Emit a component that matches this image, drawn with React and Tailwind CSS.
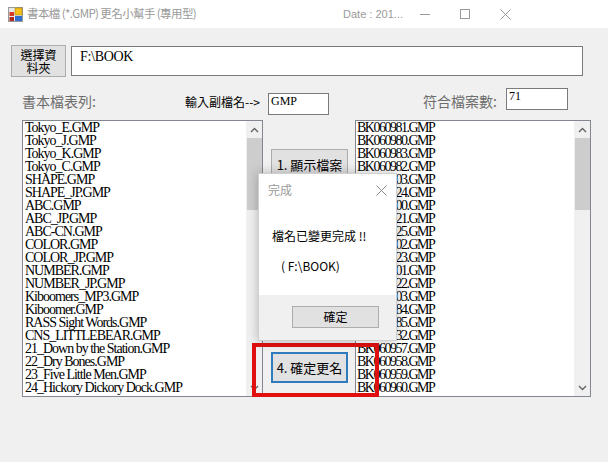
import React from "react";

const leftItems = [
  "Tokyo_E.GMP", "Tokyo_J.GMP", "Tokyo_K.GMP", "Tokyo_C.GMP", "SHAPE.GMP", "SHAPE_JP.GMP",
  "ABC.GMP", "ABC_JP.GMP", "ABC-CN.GMP", "COLOR.GMP", "COLOR_JP.GMP", "NUMBER.GMP",
  "NUMBER_JP.GMP", "Kiboomers_MP3.GMP", "Kiboomer.GMP", "RASS Sight Words.GMP",
  "CNS_LITTLEBEAR.GMP", "21_Down by the Station.GMP", "22_Dry Bones.GMP",
  "23_Five Little Men.GMP", "24_Hickory Dickory Dock.GMP",
];

const rightItems = [
  "BK060981", "BK060980", "BK060983", "BK060982", "BK060903", "BK060924", "BK060900",
  "BK060921", "BK060925", "BK060902", "BK060923", "BK060901", "BK060922", "BK060903",
  "BK060984", "BK060985", "BK060932", "BK060957", "BK060958", "BK060959", "BK060960",
].map((s) => s + ".GMP");

function ScrollBar() {
  return (
    <div className="w-[16px] h-full bg-[#f0f0f0] flex flex-col items-center">
      <div className="h-[17px] w-full flex items-center justify-center">
        <svg width="9" height="6" viewBox="0 0 9 6">
          <polyline points="1,5 4.5,1.5 8,5" fill="none" stroke="#606060" strokeWidth="1.3" />
        </svg>
      </div>
      <div className="w-[15px] h-[72px] bg-[#cdcdcd]" />
      <div className="flex-1" />
      <div className="h-[17px] w-full flex items-center justify-center">
        <svg width="9" height="6" viewBox="0 0 9 6">
          <polyline points="1,1 4.5,4.5 8,1" fill="none" stroke="#606060" strokeWidth="1.3" />
        </svg>
      </div>
    </div>
  );
}

export default function App() {
  return (
    <div className="w-[608px] h-[462px] bg-[#f0f0f0] relative overflow-hidden font-['Noto_Sans_CJK_TC',sans-serif]">
      {/* Title bar */}
      <div className="h-[28px] bg-white flex items-center">
        <svg className="ml-[8px]" width="15" height="15" viewBox="0 0 15 15">
          <rect x="0.5" y="0.5" width="14" height="14" fill="#e8e8e8" stroke="#9a9a9a" />
          <rect x="7" y="1" width="7" height="7" fill="#f6c21a" stroke="#b08000" strokeWidth="0.6" />
          <rect x="1.5" y="5" width="4.5" height="4" fill="#d33a2a" />
          <rect x="1.5" y="10" width="4.5" height="4" fill="#b02a20" />
          <rect x="7" y="9" width="7" height="5" fill="#2f6fd0" />
        </svg>
        <span className="ml-[4px] text-[11.5px] tracking-[-0.6px] text-[#9a9a9a] leading-none">書本檔 (*.GMP) 更名小幫手 (專用型)</span>
        <div className="flex-1" />
        <span className="mr-[2px] text-[11px] text-[#9a9a9a] leading-none font-['Liberation_Sans',sans-serif]">Date : 201...</span>
        <div className="w-[40px] h-[28px] flex items-center justify-center">
          <div className="w-[10px] h-px bg-[#9a9a9a]" />
        </div>
        <div className="w-[40px] h-[28px] flex items-center justify-center">
          <div className="w-[10px] h-[10px] border border-[#9a9a9a]" />
        </div>
        <div className="w-[40px] h-[28px] flex items-center justify-center">
          <svg width="11" height="11" viewBox="0 0 11 11">
            <path d="M0.5 0.5 L10.5 10.5 M10.5 0.5 L0.5 10.5" stroke="#9a9a9a" strokeWidth="1" />
          </svg>
        </div>
        <div className="w-[83px]" />
      </div>

      {/* Row 1 */}
      <div className="mt-[17px] ml-[11px] flex items-center">
        <button className="w-[55px] h-[32px] border border-[#adadad] bg-[#e1e1e1] text-[12px] leading-[13px] text-black flex flex-col items-center justify-center">
          <span>選擇資</span>
          <span>料夾</span>
        </button>
        <div className="ml-[5px] w-[512px] h-[30px] bg-white border border-[#7a7a7a] pl-[8px] pt-[2px] text-[14px] leading-[16px] tracking-[-0.3px] font-['Liberation_Serif',serif] text-black">
          F:\BOOK
        </div>
      </div>

      {/* Row 2 */}
      <div className="mt-[10px] h-[28px] flex items-start">
        <span className="ml-[22px] mt-[6px] w-[163px] text-[14px] leading-[16px] text-[#6d6d6d]">書本檔表列:</span>
        <span className="mt-[8px] w-[83px] text-[12px] leading-[14px] text-black">輸入副檔名--&gt;</span>
        <div className="mt-[6px] w-[61px] h-[22px] bg-white border border-[#7a7a7a] pl-[2px] text-[12px] leading-[15px] font-['Liberation_Serif',serif]">GMP</div>
        <span className="ml-[94px] mt-[6px] w-[83px] text-[14px] leading-[16px] text-[#6d6d6d]">符合檔案數:</span>
        <div className="mt-[1px] w-[62px] h-[22px] bg-white border border-[#7a7a7a] pl-[2px] text-[12px] leading-[15px] font-['Liberation_Serif',serif]">71</div>
      </div>

      {/* Row 3 */}
      <div className="mt-[5px] flex items-start">
        <div className="ml-[22px] w-[241px] h-[277px] bg-white border border-[#828790] flex">
          <div className="flex-1 pl-[2px] font-['Liberation_Serif',serif] text-[14px] tracking-[-1px] text-black overflow-hidden">
            {leftItems.map((t, i) => (
              <div key={i} className="h-[13px] leading-[13px] whitespace-nowrap">{t}</div>
            ))}
          </div>
          <ScrollBar />
        </div>

        <div className="w-[92px] h-[277px] flex flex-col">
          <button className="ml-[8px] mt-[29px] w-[77px] h-[31px] border border-[#adadad] bg-[#e1e1e1] text-[13px] text-black">1. 顯示檔案</button>
          <button className="ml-[8px] mt-[172px] w-[77px] h-[31px] border-2 border-[#2f7bbd] bg-[#e1e1e1] text-[13px] text-black">4. 確定更名</button>
        </div>

        <div className="w-[236px] h-[277px] bg-white border border-[#828790] flex">
          <div className="flex-1 pl-[1px] font-['Liberation_Serif',serif] text-[14px] tracking-[-1.5px] text-black overflow-hidden">
            {rightItems.map((t, i) => (
              <div key={i} className="h-[13px] leading-[13px] whitespace-nowrap">{t}</div>
            ))}
          </div>
          <ScrollBar />
        </div>
      </div>

      {/* Red annotation box */}
      <div className="absolute left-[252px] top-[343px] w-[127px] h-[54px] border-[4px] border-[#e01010]" />

      {/* Dialog */}
      <div className="absolute left-[258px] top-[173px] w-[139px] h-[168px] bg-white border border-[#cfcfcf] shadow-[0_0_10px_rgba(0,0,0,0.25)] flex flex-col">
        <div className="h-[32px] flex items-center">
          <span className="ml-[9px] text-[12px] text-[#9a9a9a]">完成</span>
          <div className="flex-1" />
          <svg className="mr-[9px]" width="11" height="11" viewBox="0 0 11 11">
            <path d="M0.5 0.5 L10.5 10.5 M10.5 0.5 L0.5 10.5" stroke="#8a8a8a" strokeWidth="1" />
          </svg>
        </div>
        <div className="flex-1 flex flex-col text-[12px] text-black">
          <span className="ml-[13px] mt-[22px] leading-[16px]">檔名已變更完成 !!</span>
          <span className="ml-[22px] mt-[14px] leading-[16px]">( F:\BOOK)</span>
        </div>
        <div className="h-[45px] bg-[#f0f0f0] flex items-start">
          <button className="ml-[33px] mt-[11px] w-[87px] h-[22px] border border-[#adadad] bg-[#e1e1e1] text-[12px] text-black">確定</button>
        </div>
      </div>
    </div>
  );
}
